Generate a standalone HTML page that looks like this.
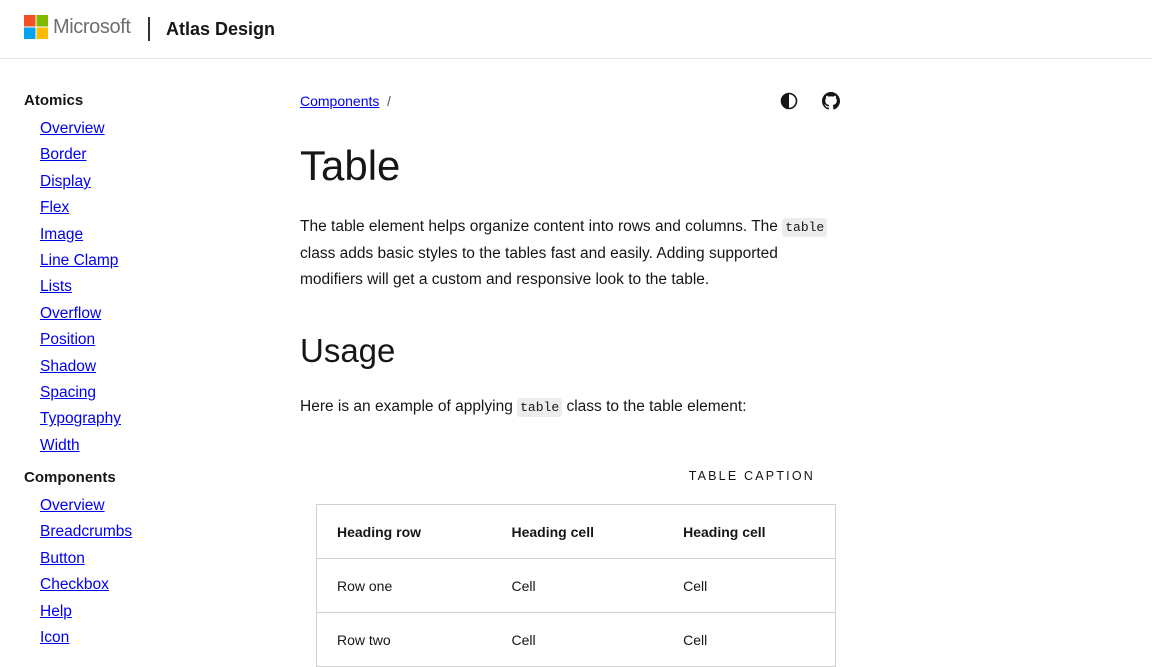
<!DOCTYPE html>
<html><head><meta charset="utf-8"><style>
*{margin:0;padding:0;box-sizing:border-box}
body{width:1152px;height:648px;overflow:hidden;background:#fff;font-family:"Liberation Sans",sans-serif;color:#161616;position:relative}
.hdr{position:absolute;left:0;top:0;width:1152px;height:59px;border-bottom:1px solid #e6e6e6}
.logo{position:absolute;left:24px;top:15px;width:24px;height:24px}
.ms{position:absolute;left:53px;top:16px;font-size:20px;color:#6e6e6e;letter-spacing:-0.4px}
.div{position:absolute;left:148px;top:17px;width:2px;height:24px;background:#333}
.atlas{position:absolute;left:166px;top:19px;font-size:18px;font-weight:bold;color:#161616}
.side{position:absolute;left:24px;top:90px;font-size:15.5px}
.side h4{font-size:15px;font-weight:bold;height:26px;line-height:22px}
.side a{display:block;margin-left:16px;color:#0000ee;text-decoration:underline;height:26.4px;line-height:26px}
.main{position:absolute;left:300px;top:0;width:540px}
.bc{position:absolute;top:93px;font-size:14px;color:#0000ee;text-decoration:underline}
.bcs{position:absolute;top:93px;left:87px;font-size:14px;color:#555}
h1{position:absolute;top:142px;font-size:42px;font-weight:normal}
h2{position:absolute;top:332px;font-size:33px;font-weight:normal}
p{position:absolute;font-size:15.5px;line-height:26px;width:540px}
code{font-family:"Liberation Mono",monospace;font-size:13px;background:#ececec;padding:2px 3px;border-radius:3px}
.cap{position:absolute;top:469px;right:25px;font-size:12.5px;letter-spacing:2.2px}
table{position:absolute;left:16px;top:504px;width:520px;border-collapse:collapse;border:1px solid #d1d1d1;font-size:14px}
td,th{height:54px;border-bottom:1px solid #d1d1d1;text-align:left;padding-left:20px;font-weight:normal}
th{font-weight:bold}
</style></head><body>
<div class="hdr">
<svg class="logo" viewBox="0 0 24 24"><rect x="0" y="0" width="11.5" height="11.5" fill="#f25022"/><rect x="12.5" y="0" width="11.5" height="11.5" fill="#7fba00"/><rect x="0" y="12.5" width="11.5" height="11.5" fill="#00a4ef"/><rect x="12.5" y="12.5" width="11.5" height="11.5" fill="#ffb900"/></svg>
<div class="ms">Microsoft</div><div class="div"></div><div class="atlas">Atlas Design</div>
</div>
<div class="side">
<h4>Atomics</h4>
<a>Overview</a><a>Border</a><a>Display</a><a>Flex</a><a>Image</a><a>Line Clamp</a><a>Lists</a><a>Overflow</a><a>Position</a><a>Shadow</a><a>Spacing</a><a>Typography</a><a>Width</a>
<h4 style="margin-top:8px">Components</h4>
<a>Overview</a><a>Breadcrumbs</a><a>Button</a><a>Checkbox</a><a>Help</a><a>Icon</a>
</div>
<div class="main">
<span class="bc">Components</span><span class="bcs">/</span>
<svg style="position:absolute;left:480px;top:92px" width="18" height="18" viewBox="0 0 18 18"><circle cx="9" cy="9" r="7.5" fill="none" stroke="#161616" stroke-width="1.6"/><path d="M9 1.5A7.5 7.5 0 0 0 9 16.5Z" fill="#161616"/></svg>
<svg style="position:absolute;left:522px;top:92px" width="18" height="18" viewBox="0 0 16 16"><path fill="#161616" d="M8 0C3.58 0 0 3.58 0 8c0 3.54 2.29 6.530 5.47 7.59.4.07.55-.17.55-.38 0-.19-.01-.82-.01-1.49-2.01.37-2.53-.49-2.69-.94-.09-.23-.48-.94-.82-1.13-.28-.15-.68-.52-.01-.53.63-.01 1.08.58 1.230.82.72 1.21 1.87.87 2.33.66.07-.52.28-.87.51-1.07-1.78-.2-3.64-.89-3.64-3.95 0-.87.31-1.59.82-2.150-.08-.2-.36-1.02.08-2.12 0 0 .67-.21 2.2.82.64-.18 1.32-.27 2-.27.68 0 1.36.09 2 .27 1.53-1.04 2.2-.82 2.2-.82.44 1.1.16 1.92.08 2.12.51.56.82 1.27.82 2.15 0 3.07-1.87 3.75-3.65 3.95.29.25.54.73.54 1.48 0 1.07-.01 1.93-.01 2.2 0 .21.15.46.55.38A8.013 8.013 0 0016 8c0-4.42-3.58-8-8-8z"/></svg>
<h1>Table</h1>
<p style="top:214px">The table element helps organize content into rows and columns. The <code>table</code> class adds basic styles to the tables fast and easily. Adding supported modifiers will get a custom and responsive look to the table.</p>
<h2>Usage</h2>
<p style="top:394px">Here is an example of applying <code>table</code> class to the table element:</p>
<div class="cap">TABLE CAPTION</div>
<table>
<tr><th>Heading row</th><th>Heading cell</th><th>Heading cell</th></tr>
<tr><td>Row one</td><td>Cell</td><td>Cell</td></tr>
<tr><td>Row two</td><td>Cell</td><td>Cell</td></tr>
</table>
</div>
</body></html>
